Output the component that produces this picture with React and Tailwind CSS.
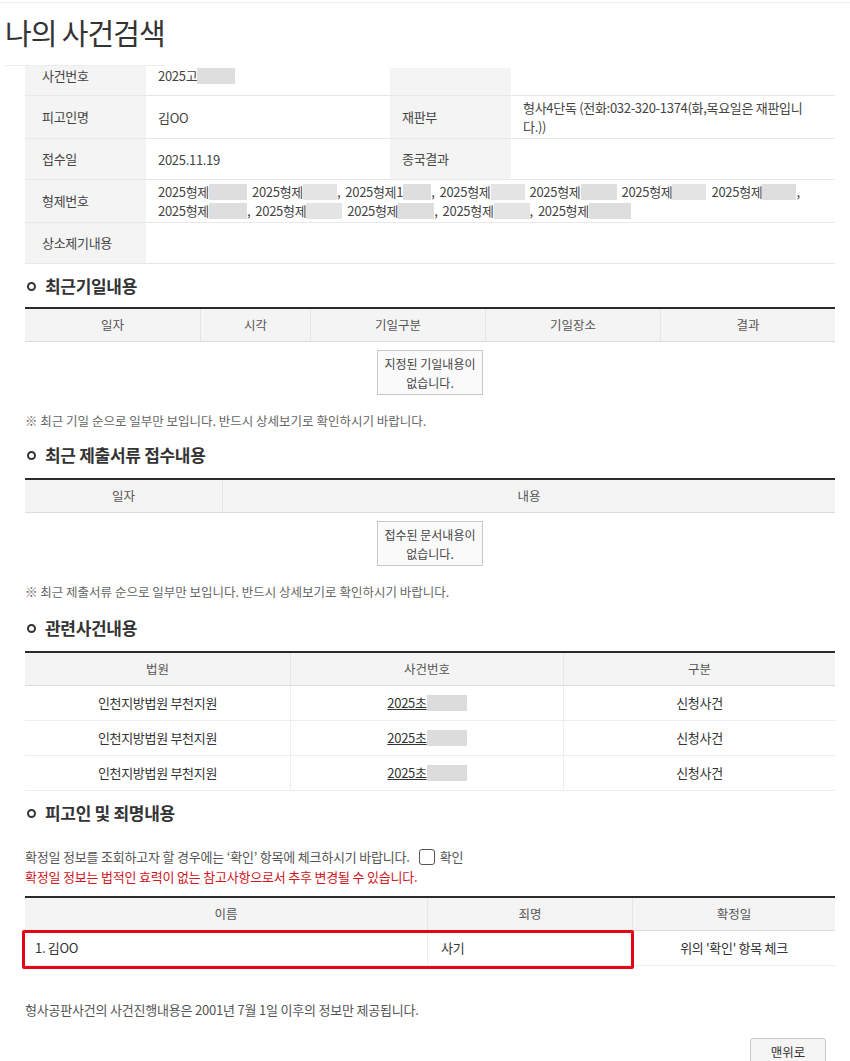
import React from 'react';

const font = "font-['Noto_Sans_CJK_KR','Noto_Sans',sans-serif]";

const Blur = ({ w = 40, tone = 'bg-[#dedede]' }) => (
  <span className={`inline-block align-middle h-[16px] ${tone}`} style={{ width: w }} />
);

const SectionTitle = ({ children, className = '' }) => (
  <h2 className={`flex items-center gap-[9px] pl-[27px] text-[17px] leading-[22px] font-bold text-[#333] tracking-[-0.3px] ${className}`}>
    <span className="w-[9px] h-[9px] rounded-full border-[2px] border-[#333]" />
    {children}
  </h2>
);

const HeadRow = ({ cols, widths }) => (
  <div className="flex border-t-2 border-[#2b2b2b] bg-[#f4f4f4] border-b border-b-[#dcdcdc] h-[35px]">
    {cols.map((c, i) => (
      <div
        key={c}
        className={`flex items-center justify-center text-[12.5px] text-[#555] ${i > 0 ? 'border-l border-[#e6e6e6]' : ''}`}
        style={{ width: widths[i] }}
      >
        {c}
      </div>
    ))}
  </div>
);

const EmptyBox = ({ lines }) => (
  <div className="flex justify-center pt-[8px] pb-[8px]">
    <div className="w-[106px] h-[45px] border border-[#c8c8c8] bg-[#fafafa] flex flex-col items-center justify-center text-[12px] leading-[19px] text-[#444]">
      {lines.map((l) => (
        <span key={l}>{l}</span>
      ))}
    </div>
  </div>
);

const Note = ({ children }) => (
  <p className="mt-[9px] px-[25px] text-[12.5px] leading-[18px] text-[#666]">{children}</p>
);

const InfoRow = ({ label, value, label2, value2, h, span, first }) => (
  <div className="flex border-b border-[#e8e8e8] text-[13px] text-[#444] tracking-[-0.3px]" style={{ height: h }}>
    <div className={`w-[121px] bg-[#f4f4f4] flex items-center pl-[17px] ${first ? 'pb-[10px]' : ''}`}>{label}</div>
    <div className={`${span ? 'flex-1' : 'w-[244px]'} flex items-center pl-[12px] leading-[19px] ${first ? 'pb-[10px]' : ''}`}>
      {value}
    </div>
    {!span && (
      <>
        <div className={`w-[121px] bg-[#f4f4f4] flex items-center pl-[12px] ${first ? 'pb-[10px] mt-[2px]' : ''}`}>{label2}</div>
        <div className="flex-1 flex items-center pl-[12px] pr-[30px] leading-[19px]">{value2}</div>
      </>
    )}
  </div>
);

// 형제번호 목록 (가려진 부분은 회색 블록)
const caseLines = [
  [
    { pre: '2025형제', w: 38, sep: '' },
    { pre: '2025형제', w: 34, sep: ',' },
    { pre: '2025형제1', w: 28, sep: ',' },
    { pre: '2025형제', w: 34, sep: '' },
    { pre: '2025형제', w: 36, sep: '' },
    { pre: '2025형제', w: 34, sep: '' },
    { pre: '2025형제', w: 34, sep: ',' },
  ],
  [
    { pre: '2025형제', w: 38, sep: ',' },
    { pre: '2025형제', w: 36, sep: '' },
    { pre: '2025형제', w: 36, sep: ',' },
    { pre: '2025형제', w: 36, sep: ',' },
    { pre: '2025형제', w: 42, sep: '' },
  ],
];

const App = () => {
  const related = [1, 2, 3];
  return (
    <div className={`${font} bg-white w-[850px] min-h-[1061px] text-[#444] overflow-hidden`}>
      <div className="h-[3px] border-b border-[#ececec]" />

      {/* Title */}
      <div className="h-[62px] pt-[10px] pl-[5px]">
        <h1 className="text-[29px] leading-[38px] tracking-[-1px] text-[#333]">나의 사건검색</h1>
      </div>
      <div className="ml-[5px] w-[160px] h-px bg-[#ececec]" />

      {/* Case info */}
      <div className="ml-[25px] w-[810px]">
        <InfoRow first h={30} label="사건번호" value={<span className="flex items-center">2025고<Blur w={38} /></span>} label2="" value2="" />
        <InfoRow
          h={43}
          label="피고인명"
          value="김OO"
          label2="재판부"
          value2="형사4단독 (전화:032-320-1374(화,목요일은 재판입니다.))"
        />
        <InfoRow h={41} label="접수일" value="2025.11.19" label2="종국결과" value2="" />
        <InfoRow
          h={43}
          span
          label="형제번호"
          value={
            <div className="flex flex-col">
              {caseLines.map((line, li) => (
                <div key={li} className="flex">
                  {line.map((c, i) => (
                    <span key={i} className="flex items-center h-[19px] mr-[5px]">
                      <span>{c.pre}</span>
                      <Blur w={c.w} tone={i % 2 ? 'bg-[#e4e4e4]' : 'bg-[#dedede]'} />
                      {c.sep && <span>{c.sep}</span>}
                    </span>
                  ))}
                </div>
              ))}
            </div>
          }
        />
        <InfoRow h={41} span label="상소제기내용" value="" />
      </div>

      {/* 최근기일내용 */}
      <SectionTitle className="mt-[11px]">최근기일내용</SectionTitle>
      <div className="ml-[25px] w-[810px] mt-[10px]">
        <HeadRow cols={['일자', '시각', '기일구분', '기일장소', '결과']} widths={[175, 110, 175, 175, 175]} />
        <EmptyBox lines={['지정된 기일내용이', '없습니다.']} />
      </div>
      <Note>※ 최근 기일 순으로 일부만 보입니다. 반드시 상세보기로 확인하시기 바랍니다.</Note>

      {/* 최근 제출서류 접수내용 */}
      <SectionTitle className="mt-[14px]">최근 제출서류 접수내용</SectionTitle>
      <div className="ml-[25px] w-[810px] mt-[12px]">
        <HeadRow cols={['일자', '내용']} widths={[197, 613]} />
        <EmptyBox lines={['접수된 문서내용이', '없습니다.']} />
      </div>
      <Note>※ 최근 제출서류 순으로 일부만 보입니다. 반드시 상세보기로 확인하시기 바랍니다.</Note>

      {/* 관련사건내용 */}
      <SectionTitle className="mt-[16px]">관련사건내용</SectionTitle>
      <div className="ml-[25px] w-[810px] mt-[12px]">
        <HeadRow cols={['법원', '사건번호', '구분']} widths={[265, 273, 272]} />
        {related.map((r) => (
          <div key={r} className="flex h-[35px] border-b border-[#ececec] text-[13px] text-[#333] tracking-[-0.3px]">
            <div className="w-[265px] flex items-center justify-center">인천지방법원 부천지원</div>
            <div className="w-[273px] flex items-center justify-center border-l border-[#efefef]">
              <span className="underline">2025초</span>
              <Blur w={40} tone="bg-[#dcdcdc]" />
            </div>
            <div className="flex-1 flex items-center justify-center border-l border-[#efefef]">신청사건</div>
          </div>
        ))}
      </div>

      {/* 피고인 및 죄명내용 */}
      <SectionTitle className="mt-[11px]">피고인 및 죄명내용</SectionTitle>
      <div className="px-[25px] mt-[23px] text-[13px] leading-[20px] tracking-[-0.2px]">
        <p className="flex items-center text-[#555]">
          확정일 정보를 조회하고자 할 경우에는 ‘확인’ 항목에 체크하시기 바랍니다.
          <span className="ml-[9px] mr-[5px] w-[16px] h-[16px] rounded-[3px] border border-[#555] bg-white" />
          확인
        </p>
        <p className="text-[#d0161c]">확정일 정보는 법적인 효력이 없는 참고사항으로서 추후 변경될 수 있습니다.</p>
      </div>
      <div className="relative ml-[25px] w-[810px] mt-[9px]">
        <HeadRow cols={['이름', '죄명', '확정일']} widths={[402, 205, 203]} />
        <div className="flex h-[35px] border-b border-[#ececec] text-[13px] text-[#333] tracking-[-0.3px]">
          <div className="w-[402px] flex items-center pl-[10px]">1. 김OO</div>
          <div className="w-[205px] flex items-center pl-[13px] border-l border-[#efefef]">사기</div>
          <div className="flex-1 flex items-center justify-center border-l border-[#efefef]">위의 '확인' 항목 체크</div>
        </div>
        <div className="absolute left-[-3px] top-[34px] w-[612px] h-[39px] border-[3px] border-[#e30613] rounded-[2px]" />
      </div>

      <p className="mt-[35px] px-[25px] text-[13px] leading-[18px] text-[#555] tracking-[-0.2px]">
        형사공판사건의 사건진행내용은 2001년 7월 1일 이후의 정보만 제공됩니다.
      </p>

      <div className="flex justify-end pr-[24px] mt-[19px]">
        <button className="w-[76px] h-[28px] border border-[#c8c8c8] rounded-[3px] bg-[#f5f5f5] text-[12.5px] text-[#333]">
          맨위로
        </button>
      </div>
    </div>
  );
};

export default App;
